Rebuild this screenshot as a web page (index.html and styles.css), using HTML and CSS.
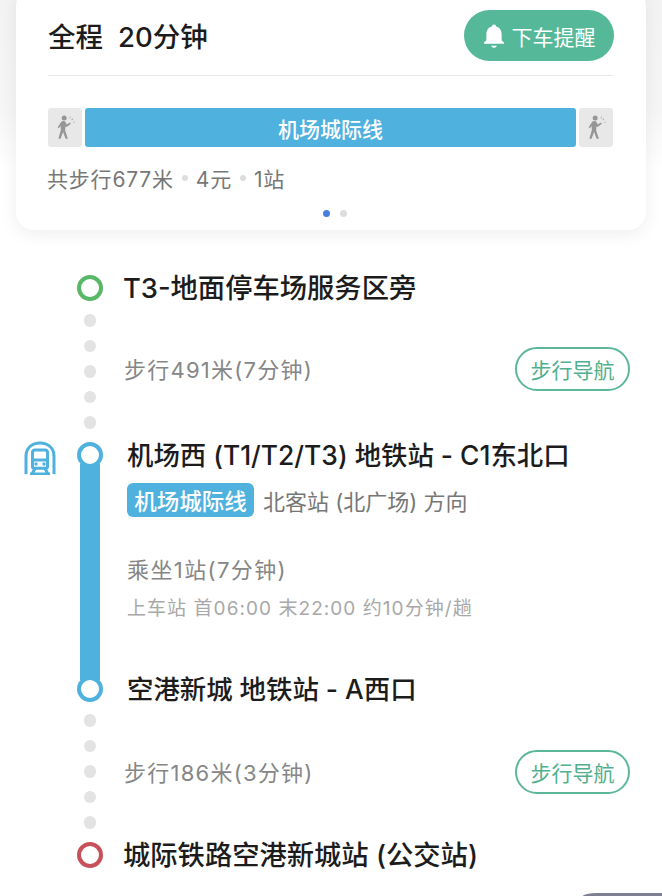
FILE: index.html
```html
<!DOCTYPE html>
<html lang="zh-CN">
<head>
    <meta charset="UTF-8">
    <meta name="viewport" content="width=device-width, initial-scale=1.0">
    <title>路线详情</title>
    <link rel="stylesheet" href="styles.css">
</head>
<body>
    <div class="card">
        <div class="card-head">
            <div class="total"><span>全程</span><span>20分钟</span></div>
            <button class="remind-btn">
                <svg class="bell" viewBox="0 0 24 28" width="22" height="26">
                    <path fill="#fff" d="M12 1.500c1.300 0 2.200.9 2.300 2.100 3.900 1 6 4.300 6 8.400v5.500c0 1.400 1 2.300 2.300 3.200.8.600.4 1.800-.6 1.800H2c-1 0-1.400-1.200-.6-1.800 1.300-.9 2.300-1.800 2.300-3.200V12c0-4.100 2.100-7.400 6-8.400.1-1.200 1-2.100 2.300-2.100z"/>
                    <path fill="#fff" d="M9 24.500h6c-.3 1.300-1.500 2.200-3 2.200s-2.700-.9-3-2.200z"/>
                </svg>
                <span>下车提醒</span>
            </button>
        </div>
        <div class="plan-bar">
            <div class="walk-cell">
                <svg viewBox="0 0 24 32" width="20" height="27"><use href="#walker"/></svg>
            </div>
            <div class="line-cell">机场城际线</div>
            <div class="walk-cell">
                <svg viewBox="0 0 24 32" width="20" height="27"><use href="#walker"/></svg>
            </div>
        </div>
        <div class="summary">
            <span>共步行677米</span><i></i><span>4元</span><i></i><span>1站</span>
        </div>
        <div class="pager"><b class="on"></b><b></b></div>
    </div>

    <div class="route">
        <div class="row stop-row">
            <div class="mode"></div>
            <div class="rail"><div class="ring ring-green"></div></div>
            <div class="stop-name">T3-地面停车场服务区旁</div>
        </div>

        <div class="row walk-row">
            <div class="mode"></div>
            <div class="rail dots"><i></i><i></i><i></i><i></i><i></i></div>
            <div class="walk-info">
                <span>步行491米(7分钟)</span>
                <button class="nav-btn">步行导航</button>
            </div>
        </div>

        <div class="row transit-row">
            <div class="mode">
                <svg viewBox="0 0 32 34" width="32" height="34" fill="none" stroke="#4fb1dd" stroke-width="3">
                    <path d="M2 33V15C2 7 8 2 16 2s14 5 14 13v18"/>
                    <path d="M8.500 11.500c0-1.500 1-2.500 2.500-2.500h10c1.500 0 2.500 1 2.500 2.500v14c0 1-.8 1.800-1.800 1.800H10.300c-1 0-1.800-.8-1.800-1.800z"/>
                    <path d="M8.500 19h15"/>
                    <path d="M8 33l3-5.500M24 33l-3-5.500M6 33h20"/>
                    <circle cx="12" cy="23" r="1.700" fill="#4fb1dd" stroke="none"/>
                    <circle cx="20" cy="23" r="1.700" fill="#4fb1dd" stroke="none"/>
                </svg>
            </div>
            <div class="rail rail-line">
                <div class="ring ring-blue"></div>
                <div class="line"></div>
                <div class="ring ring-blue"></div>
            </div>
            <div class="transit-info">
                <div class="station">机场西 (T1/T2/T3) 地铁站 - C1东北口</div>
                <div class="direction"><span class="tag">机场城际线</span><span>北客站 (北广场) 方向</span></div>
                <div class="ride">乘坐1站(7分钟)</div>
                <div class="times">上车站 首06:00 末22:00 约10分钟/趟</div>
                <div class="station station-end">空港新城 地铁站 - A西口</div>
            </div>
        </div>

        <div class="row walk-row walk-row-2">
            <div class="mode"></div>
            <div class="rail dots"><i></i><i></i><i></i><i></i><i></i></div>
            <div class="walk-info">
                <span>步行186米(3分钟)</span>
                <button class="nav-btn">步行导航</button>
            </div>
        </div>

        <div class="row stop-row">
            <div class="mode"></div>
            <div class="rail"><div class="ring ring-red"></div></div>
            <div class="stop-name">城际铁路空港新城站 (公交站)</div>
        </div>
    </div>

    <div class="corner"></div>

    <svg class="defs" width="0" height="0">
        <symbol id="walker" viewBox="0 0 24 32">
            <circle cx="11" cy="4.500" r="3" fill="#969696"/>
            <path fill="#969696" d="M7.500 9c1-1 4-1 5 0l1.500 3.500 4-2.500 1 1.500-5 4-1.500-.8-.3 5 3.300 9.800h-2.800l-3-8-3 8H4l3-10.500-.3-5-2 2.800-1.500-1z"/>
            <path fill="none" stroke="#b4b4b4" stroke-width="1.300" d="M20 7l1.500-1.500M22 10l1.500-.5M18 5l.5-2"/>
        </symbol>
    </svg>
</body>
</html>
```

FILE: styles.css
```css
* {
    box-sizing: border-box;
}
html, body {
    margin: 0;
    height: 896px;
}
body {
    position: relative;
    overflow: hidden;
    font-family: Inter, "Noto Sans CJK SC", sans-serif;
    background: linear-gradient(#f3f3f3 0, #f6f6f6 110px, #fff 170px);
}
button {
    font-family: inherit;
    cursor: pointer;
}
.defs {
    position: absolute;
}
.card {
    height: 242px;
    margin: -12px 16px 0;
    padding: 0 32px;
    background-color: #fff;
    border-radius: 18px;
    box-shadow: 0 4px 18px rgba(0, 0, 0, 0.07);
}
.card-head {
    height: 88px;
    padding-top: 22px;
    display: flex;
    justify-content: space-between;
    align-items: flex-start;
    border-bottom: 1px solid #e8e8e8;
}
.total {
    display: flex;
    gap: 15px;
    height: 49px;
    align-items: center;
    font-size: 27.500px;
    font-weight: 500;
    color: #1c1c1c;
}
.remind-btn {
    width: 150px;
    height: 51px;
    padding: 0;
    border: none;
    border-radius: 26px;
    background-color: #55b999;
    color: #fff;
    font-size: 21px;
    display: flex;
    align-items: center;
    justify-content: center;
    gap: 7px;
}
.plan-bar {
    display: flex;
    gap: 3px;
    height: 39px;
    margin: 32px 1px 0 0;
}
.walk-cell {
    width: 34px;
    display: flex;
    align-items: center;
    justify-content: center;
    background-color: #e8e8e8;
    border-radius: 3px;
}
.line-cell {
    flex: 1;
    display: flex;
    align-items: center;
    justify-content: center;
    background-color: #4fb1dd;
    border-radius: 3px;
    color: #fff;
    font-size: 21px;
    font-weight: 500;
}
.summary {
    display: flex;
    align-items: center;
    height: 30px;
    margin: 16px 0 0 -1px;
    font-size: 21px;
    letter-spacing: 0.8px;
    color: #777;
}
.summary i {
    width: 6px;
    height: 6px;
    margin: 0 8px;
    border-radius: 50%;
    background-color: #ddd;
}
.pager {
    display: flex;
    justify-content: center;
    gap: 10px;
    margin-top: 17px;
    padding-left: 8px;
}
.pager b {
    width: 7px;
    height: 7px;
    border-radius: 50%;
    background-color: #ddd;
}
.pager .on {
    background-color: #4a7de0;
}

.route {
    padding-top: 38px;
}
.row {
    display: flex;
}
.mode {
    width: 77px;
    padding-left: 24px;
    flex-shrink: 0;
}
.rail {
    width: 26px;
    flex-shrink: 0;
    display: flex;
    flex-direction: column;
    align-items: center;
}
.ring {
    width: 26px;
    height: 26px;
    flex-shrink: 0;
    border: 4.500px solid;
    border-radius: 50%;
    background-color: #fff;
    position: relative;
}
.ring-green {
    border-color: #58b867;
}
.ring-blue {
    border-color: #4fb1dd;
}
.ring-red {
    border-color: #c8505a;
}
.stop-row {
    height: 40px;
    align-items: center;
}
.stop-name {
    margin: -4px 0 0 20px;
    font-size: 27.300px;
    font-weight: 500;
    color: #1c1c1c;
}
.walk-row {
    height: 135px;
}
.walk-row-2 {
    height: 127px;
}
.walk-row-2 .walk-info {
    margin-top: 3px;
}
.dots {
    padding-top: 6px;
    gap: 13px;
}
.dots i {
    width: 12.500px;
    height: 12.500px;
    border-radius: 50%;
    background-color: #e3e3e3;
}
.walk-info {
    flex: 1;
    height: 90px;
    margin-left: 21px;
    padding-right: 32px;
    padding-top: 32px;
    display: flex;
    justify-content: space-between;
    align-items: center;
    font-size: 22px;
    letter-spacing: 1.250px;
    color: #868686;
}
.walk-info span {
    margin-bottom: 3px;
}
.nav-btn {
    width: 115px;
    height: 44px;
    padding: 0;
    background-color: #fff;
    border: 2px solid #5cb79a;
    border-radius: 22px;
    color: #4fb08f;
    font-size: 21px;
    letter-spacing: 0;
}
.transit-row {
    height: 260px;
    margin: -1px 0 6px;
}
.mode svg {
    display: block;
    margin-top: -1px;
}
.line {
    flex: 1;
    width: 20px;
    margin: -4px 0;
    background-color: #4fb1dd;
}
.transit-info {
    margin-left: 24px;
    flex: 1;
}
.station {
    height: 26px;
    line-height: 26px;
    font-size: 26.400px;
    font-weight: 500;
    color: #1c1c1c;
}
.direction {
    display: flex;
    align-items: center;
    gap: 9px;
    margin-top: 15px;
    font-size: 22px;
    color: #777;
}
.tag {
    height: 34px;
    width: 127px;
    display: flex;
    align-items: center;
    justify-content: center;
    background-color: #4fb1dd;
    border-radius: 6px;
    color: #fff;
    font-size: 22.500px;
    font-weight: 500;
}
.ride {
    margin-top: 38px;
    font-size: 22px;
    letter-spacing: 1.400px;
    line-height: 30px;
    color: #868686;
}
.times {
    margin-top: 10px;
    font-size: 19px;
    letter-spacing: 1.050px;
    line-height: 28px;
    color: #a8a8a8;
}
.station-end {
    margin-top: 53px;
}
.corner {
    position: absolute;
    right: 0;
    bottom: 0;
    width: 79px;
    height: 3px;
    border-radius: 14px 0 0 0 / 3px 0 0 0;
    background-color: #7c8092;
}
```
